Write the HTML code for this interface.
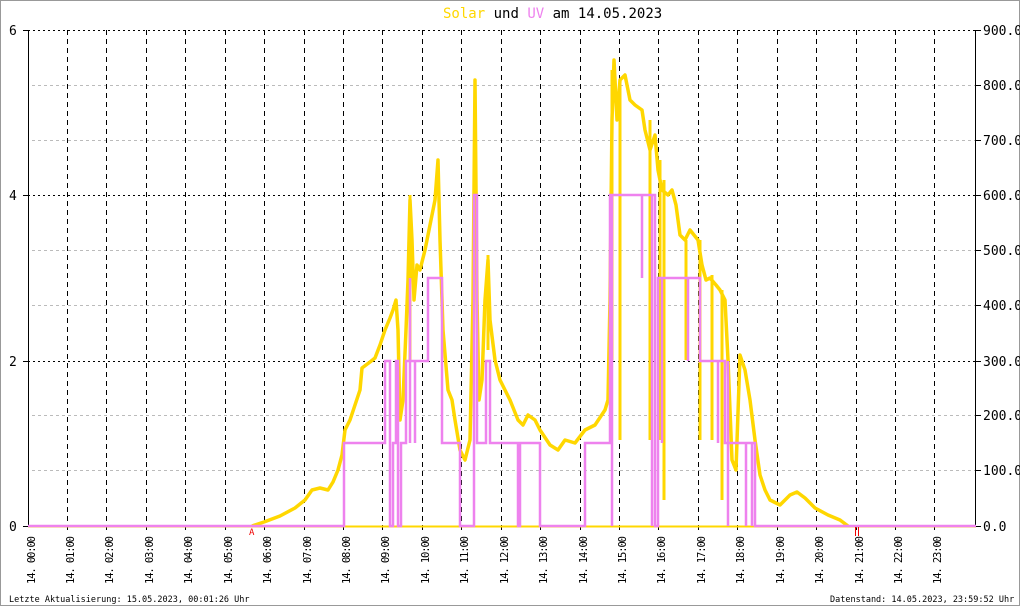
<!DOCTYPE html>
<html><head><meta charset="utf-8"><style>
html,body{margin:0;padding:0;background:#fff}
svg{display:block}
text{font-family:"DejaVu Sans Mono","Liberation Mono",monospace}
</style></head><body>
<svg width="1020" height="606" viewBox="0 0 1020 606" xmlns="http://www.w3.org/2000/svg">
<rect x="0.5" y="0.5" width="1019" height="605" fill="#fff" stroke="#999"/>
<text x="443" y="18" font-size="14"><tspan fill="#ffd700">Solar</tspan><tspan fill="#000"> und </tspan><tspan fill="#ee82ee">UV</tspan><tspan fill="#000"> am 14.05.2023</tspan></text>
<g stroke="#bbb" stroke-dasharray="3,3" stroke-width="1">
<line x1="32" x2="976" y1="470.5" y2="470.5"/><line x1="32" x2="976" y1="415.5" y2="415.5"/>
<line x1="32" x2="976" y1="305.5" y2="305.5"/><line x1="32" x2="976" y1="250.5" y2="250.5"/>
<line x1="32" x2="976" y1="140.5" y2="140.5"/><line x1="32" x2="976" y1="85.5" y2="85.5"/>
</g>
<g stroke="#000" stroke-dasharray="2,3" stroke-width="1">
<line x1="28" x2="976" y1="30.5" y2="30.5"/><line x1="28" x2="976" y1="195.5" y2="195.5"/><line x1="28" x2="976" y1="361.5" y2="361.5"/>
</g>
<g stroke="#000" stroke-dasharray="5,4" stroke-width="1">
<line x1="67.5" x2="67.5" y1="30" y2="530"/><line x1="106.5" x2="106.5" y1="30" y2="530"/><line x1="146.5" x2="146.5" y1="30" y2="530"/>
<line x1="185.5" x2="185.5" y1="30" y2="530"/><line x1="225.5" x2="225.5" y1="30" y2="530"/><line x1="264.5" x2="264.5" y1="30" y2="530"/>
<line x1="304.5" x2="304.5" y1="30" y2="530"/><line x1="343.5" x2="343.5" y1="30" y2="530"/><line x1="382.5" x2="382.5" y1="30" y2="530"/>
<line x1="422.5" x2="422.5" y1="30" y2="530"/><line x1="461.5" x2="461.5" y1="30" y2="530"/><line x1="501.5" x2="501.5" y1="30" y2="530"/>
<line x1="540.5" x2="540.5" y1="30" y2="530"/><line x1="580.5" x2="580.5" y1="30" y2="530"/><line x1="619.5" x2="619.5" y1="30" y2="530"/>
<line x1="658.5" x2="658.5" y1="30" y2="530"/><line x1="698.5" x2="698.5" y1="30" y2="530"/><line x1="737.5" x2="737.5" y1="30" y2="530"/>
<line x1="777.5" x2="777.5" y1="30" y2="530"/><line x1="816.5" x2="816.5" y1="30" y2="530"/><line x1="856.5" x2="856.5" y1="30" y2="530"/>
<line x1="895.5" x2="895.5" y1="30" y2="530"/><line x1="934.5" x2="934.5" y1="30" y2="530"/>
</g>
<line x1="28.5" x2="28.5" y1="30" y2="527" stroke="#000"/>
<line x1="975.5" x2="975.5" y1="30" y2="527" stroke="#000"/>
<g stroke="#000"><line x1="23" x2="28" y1="30.5" y2="30.5"/><line x1="23" x2="28" y1="195.5" y2="195.5"/><line x1="23" x2="28" y1="361.5" y2="361.5"/><line x1="23" x2="28" y1="526.5" y2="526.5"/>
<line x1="976" x2="981" y1="30.5" y2="30.5"/><line x1="976" x2="981" y1="85.5" y2="85.5"/><line x1="976" x2="981" y1="140.5" y2="140.5"/><line x1="976" x2="981" y1="195.5" y2="195.5"/><line x1="976" x2="981" y1="250.5" y2="250.5"/><line x1="976" x2="981" y1="305.5" y2="305.5"/><line x1="976" x2="981" y1="361.5" y2="361.5"/><line x1="976" x2="981" y1="415.5" y2="415.5"/><line x1="976" x2="981" y1="470.5" y2="470.5"/><line x1="976" x2="981" y1="526.5" y2="526.5"/></g>
<g font-size="13" fill="#000">
<text x="9" y="35">6</text><text x="9" y="200">4</text><text x="9" y="366">2</text><text x="9" y="531">0</text>
<text x="983" y="35">900.0</text><text x="983" y="90">800.0</text><text x="983" y="145">700.0</text><text x="983" y="200">600.0</text><text x="983" y="255">500.0</text><text x="983" y="310">400.0</text><text x="983" y="366">300.0</text><text x="983" y="420">200.0</text><text x="983" y="475">100.0</text><text x="983" y="531">0.0</text>
</g>
<line x1="28" x2="976" y1="526.5" y2="526.5" stroke="#ffd700" stroke-width="2"/>
<polyline fill="none" stroke="#ffd700" stroke-width="3.5" stroke-linejoin="round" points="252,526 264,522 280,516 295,508 305,500 312,490 320,488 328,490 333,482 338,470 342,455 345,430 350,420 355,405 360,390 362,368 370,362 375,358 380,345 385,330 390,318 393,310 396,300 398,330 400,420 403,400 406,330 408,280 410,200 412,240 414,300 417,265 420,270 425,250 430,225 435,200 438,160 440,240 443,330 448,390 452,400 455,420 460,450 465,460 470,440 473,300 475,80 477,300 479,400 482,380 485,300 488,260 490,320 495,360 500,380 505,390 510,400 518,420 523,425 528,415 535,420 540,430 550,445 558,450 565,440 575,443 585,430 595,425 605,410 608,400 610,300 612,120 614,60 617,120 620,80 625,75 630,100 635,105 642,110 645,130 650,150 655,135 658,170 662,190 668,195 672,190 676,205 680,235 685,240 690,230 698,240 702,265 706,280 710,278 716,285 720,290 725,300 728,360 732,460 736,470 740,355 745,370 750,400 755,440 760,475 765,490 770,500 780,505 790,495 797,492 805,498 815,508 828,515 840,520 848,526"/>
<g stroke="#ffd700" stroke-width="3">
<line x1="612" y1="360" x2="612" y2="70"/><line x1="620" y1="440" x2="620" y2="80"/><line x1="650" y1="440" x2="650" y2="120"/><line x1="660" y1="440" x2="660" y2="160"/><line x1="664" y1="500" x2="664" y2="180"/><line x1="686" y1="360" x2="686" y2="240"/><line x1="700" y1="440" x2="700" y2="240"/><line x1="712" y1="440" x2="712" y2="275"/><line x1="722" y1="500" x2="722" y2="290"/><line x1="410" y1="360" x2="410" y2="195"/><line x1="488" y1="350" x2="488" y2="255"/>
</g>
<polyline fill="none" stroke="#ee82ee" stroke-width="2.5" points="28,526 344,526 344,443 385,443 385,361 390,361 390,526 393,526 393,443 396,443 396,361 398,361 398,526 401,526 401,443 406,443 406,361 428,361 428,278 442,278 442,443 460,443 460,526 474,526 474,195 477,195 477,443 486,443 486,361 490,361 490,443 518,443 518,526 520,526 520,443 540,443 540,526 585,526 585,443 610,443 610,195 655,195 655,526 658,526 658,278 700,278 700,361 725,361 725,443 755,443 755,526 976,526"/>
<g stroke="#ee82ee" stroke-width="2.5">
<line x1="612" y1="195" x2="612" y2="526"/><line x1="642" y1="195" x2="642" y2="278"/><line x1="652" y1="195" x2="652" y2="526"/><line x1="662" y1="278" x2="662" y2="443"/><line x1="688" y1="278" x2="688" y2="361"/><line x1="718" y1="361" x2="718" y2="443"/><line x1="728" y1="361" x2="728" y2="526"/><line x1="746" y1="443" x2="746" y2="526"/><line x1="752" y1="443" x2="752" y2="526"/><line x1="410" y1="278" x2="410" y2="443"/><line x1="415" y1="361" x2="415" y2="443"/>
</g>
<text x="249" y="535" font-size="9" fill="#e00">A</text>
<path d="M855.5 527 V536 M858.5 527 V536" stroke="#e00" fill="none"/>
<g font-size="10.5" fill="#000">
<text transform="translate(35,584) rotate(-90)" textLength="48" lengthAdjust="spacing">14.&#160;00:00</text>
<text transform="translate(74,584) rotate(-90)" textLength="48" lengthAdjust="spacing">14.&#160;01:00</text>
<text transform="translate(113,584) rotate(-90)" textLength="48" lengthAdjust="spacing">14.&#160;02:00</text>
<text transform="translate(153,584) rotate(-90)" textLength="48" lengthAdjust="spacing">14.&#160;03:00</text>
<text transform="translate(192,584) rotate(-90)" textLength="48" lengthAdjust="spacing">14.&#160;04:00</text>
<text transform="translate(232,584) rotate(-90)" textLength="48" lengthAdjust="spacing">14.&#160;05:00</text>
<text transform="translate(271,584) rotate(-90)" textLength="48" lengthAdjust="spacing">14.&#160;06:00</text>
<text transform="translate(311,584) rotate(-90)" textLength="48" lengthAdjust="spacing">14.&#160;07:00</text>
<text transform="translate(350,584) rotate(-90)" textLength="48" lengthAdjust="spacing">14.&#160;08:00</text>
<text transform="translate(389,584) rotate(-90)" textLength="48" lengthAdjust="spacing">14.&#160;09:00</text>
<text transform="translate(429,584) rotate(-90)" textLength="48" lengthAdjust="spacing">14.&#160;10:00</text>
<text transform="translate(468,584) rotate(-90)" textLength="48" lengthAdjust="spacing">14.&#160;11:00</text>
<text transform="translate(508,584) rotate(-90)" textLength="48" lengthAdjust="spacing">14.&#160;12:00</text>
<text transform="translate(547,584) rotate(-90)" textLength="48" lengthAdjust="spacing">14.&#160;13:00</text>
<text transform="translate(587,584) rotate(-90)" textLength="48" lengthAdjust="spacing">14.&#160;14:00</text>
<text transform="translate(626,584) rotate(-90)" textLength="48" lengthAdjust="spacing">14.&#160;15:00</text>
<text transform="translate(665,584) rotate(-90)" textLength="48" lengthAdjust="spacing">14.&#160;16:00</text>
<text transform="translate(705,584) rotate(-90)" textLength="48" lengthAdjust="spacing">14.&#160;17:00</text>
<text transform="translate(744,584) rotate(-90)" textLength="48" lengthAdjust="spacing">14.&#160;18:00</text>
<text transform="translate(784,584) rotate(-90)" textLength="48" lengthAdjust="spacing">14.&#160;19:00</text>
<text transform="translate(823,584) rotate(-90)" textLength="48" lengthAdjust="spacing">14.&#160;20:00</text>
<text transform="translate(863,584) rotate(-90)" textLength="48" lengthAdjust="spacing">14.&#160;21:00</text>
<text transform="translate(902,584) rotate(-90)" textLength="48" lengthAdjust="spacing">14.&#160;22:00</text>
<text transform="translate(941,584) rotate(-90)" textLength="48" lengthAdjust="spacing">14.&#160;23:00</text>
</g>
<text x="9" y="602" font-size="8.5" fill="#000">Letzte Aktualisierung: 15.05.2023, 00:01:26 Uhr</text>
<text x="830" y="602" font-size="8.5" fill="#000">Datenstand: 14.05.2023, 23:59:52 Uhr</text>
</svg>
</body></html>
